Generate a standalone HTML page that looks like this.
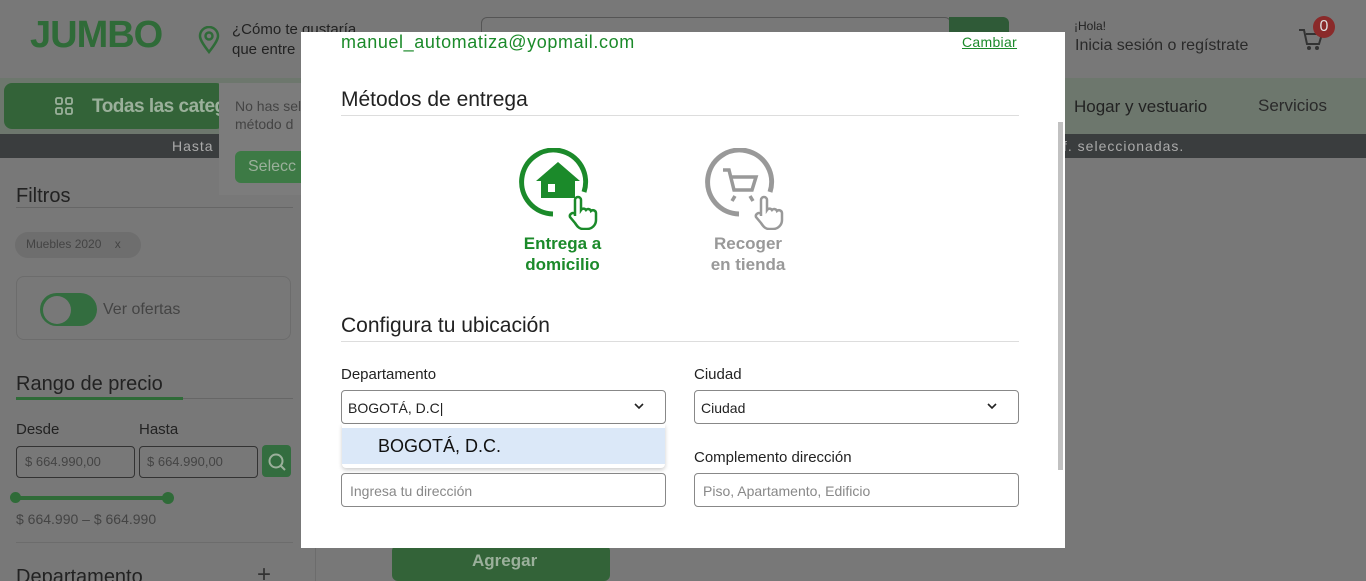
<!DOCTYPE html>
<html><head><meta charset="utf-8"><style>
*{box-sizing:border-box;margin:0;padding:0}
html,body{width:1366px;height:581px;overflow:hidden}
body{background:#787878;font-family:"Liberation Sans",sans-serif;position:relative;color:#333}
.a{position:absolute}
.t{position:absolute;white-space:nowrap}
</style></head><body>
<div class="t" style="left:30px;top:14px;font-size:38px;font-weight:bold;color:#2f6b38;letter-spacing:-1px">JUMBO</div>
<svg class="a" style="left:197px;top:26px" width="24" height="28" viewBox="0 0 24 28"><path d="M12 26C5 17 3 13 3 10a9 9 0 0 1 18 0c0 3-2 7-9 16z" fill="none" stroke="#2f6b38" stroke-width="2.5"/><circle cx="12" cy="10" r="3.5" fill="none" stroke="#2f6b38" stroke-width="2.5"/></svg>
<div class="t" style="left:232px;top:20px;font-size:15px;color:#222;line-height:20px">¿Cómo te gustaría<br>que entre</div>
<div class="a" style="left:481px;top:17px;width:470px;height:32px;border:1px solid #555;border-radius:6px"></div>
<div class="a" style="left:949px;top:17px;width:60px;height:32px;background:#2f5a37;border-radius:0 6px 6px 0"></div>
<div class="t" style="left:1074px;top:19px;font-size:12px;color:#222">¡Hola!</div>
<div class="t" style="left:1075px;top:37px;font-size:16px;color:#2a2a2a">Inicia sesión o regístrate</div>
<svg class="a" style="left:1297px;top:27px" width="28" height="26" viewBox="0 0 28 26"><path d="M2 3h5l3 14h12l3-10H9" fill="none" stroke="#333" stroke-width="2"/><circle cx="12" cy="21" r="2" fill="#333"/><circle cx="20" cy="21" r="2" fill="#333"/></svg>
<div class="a" style="left:1313px;top:16px;width:22px;height:22px;border-radius:50%;background:#8a2a2a;color:#ddd;font-size:16px;text-align:center;line-height:22px">0</div>
<div class="a" style="left:0;top:78px;width:1366px;height:56px;background:#6d776d"></div>
<div class="a" style="left:4px;top:83px;width:220px;height:46px;background:#336338;border-radius:8px"></div>
<svg class="a" style="left:55px;top:97px" width="18" height="18"><g fill="none" stroke="#9bb09b" stroke-width="1.8"><rect x="1" y="1" width="6" height="6" rx="1.5"/><rect x="11" y="1" width="6" height="6" rx="1.5"/><rect x="1" y="11" width="6" height="6" rx="1.5"/><rect x="11" y="11" width="6" height="6" rx="1.5"/></g></svg>
<div class="t" style="left:92px;top:96px;font-size:19px;font-weight:bold;color:#9bb09b;letter-spacing:-0.5px">Todas las categ</div>
<div class="t" style="left:1074px;top:97px;font-size:17px;color:#222">Hogar y vestuario</div>
<div class="t" style="left:1258px;top:96px;font-size:17px;color:#2a2a2a">Servicios</div>
<div class="a" style="left:0;top:134px;width:1366px;height:24px;background:#3a3d3e"></div>
<div class="t" style="left:172px;top:138px;font-size:14px;color:#aaa;letter-spacing:1px">Hasta</div>
<div class="t" style="left:1063px;top:138px;font-size:14px;color:#aaa;letter-spacing:1px">f. seleccionadas.</div>
<div class="a" style="left:219px;top:83px;width:90px;height:112px;background:#7c7c7c"></div>
<div class="t" style="left:235px;top:97px;font-size:14px;color:#444;line-height:18px">No has sel<br>método d</div>
<div class="a" style="left:235px;top:151px;width:80px;height:32px;background:#3d7a45;border-radius:6px"></div>
<div class="t" style="left:248px;top:158px;font-size:16px;color:#9bb09b">Selecc</div>
<div class="t" style="left:16px;top:185px;font-size:20px;color:#222">Filtros</div>
<div class="a" style="left:16px;top:207px;width:277px;height:1px;background:#666"></div>
<div class="a" style="left:15px;top:232px;width:126px;height:26px;border-radius:13px;background:#6e6e6e"></div>
<div class="t" style="left:26px;top:237px;font-size:12px;color:#444">Muebles 2020 &nbsp;&nbsp;&nbsp;x</div>
<div class="a" style="left:16px;top:276px;width:275px;height:64px;border:1px solid #6c6c6c;border-radius:8px"></div>
<div class="a" style="left:40px;top:293px;width:57px;height:33px;border-radius:17px;background:#336d3f"></div>
<div class="a" style="left:43px;top:296px;width:28px;height:28px;border-radius:50%;background:#787878"></div>
<div class="t" style="left:103px;top:301px;font-size:16px;color:#444">Ver ofertas</div>
<div class="t" style="left:16px;top:373px;font-size:20px;color:#222">Rango de precio</div>
<div class="a" style="left:16px;top:398px;width:277px;height:1px;background:#666"></div>
<div class="a" style="left:16px;top:397px;width:167px;height:3px;background:#2f6b38"></div>
<div class="t" style="left:16px;top:421px;font-size:15px;color:#222">Desde</div>
<div class="t" style="left:139px;top:421px;font-size:15px;color:#222">Hasta</div>
<div class="a" style="left:16px;top:446px;width:119px;height:32px;border:1px solid #333;border-radius:4px"></div>
<div class="a" style="left:139px;top:446px;width:119px;height:32px;border:1px solid #333;border-radius:4px"></div>
<div class="t" style="left:25px;top:454px;font-size:13px;color:#444">$ 664.990,00</div>
<div class="t" style="left:147px;top:454px;font-size:13px;color:#444">$ 664.990,00</div>
<div class="a" style="left:262px;top:445px;width:29px;height:32px;background:#336d3f;border-radius:4px"></div>
<svg class="a" style="left:267px;top:452px" width="20" height="20"><circle cx="9" cy="9" r="6.5" fill="none" stroke="#9bb09b" stroke-width="2"/><path d="M14 14l4 4" stroke="#9bb09b" stroke-width="2"/></svg>
<div class="a" style="left:15px;top:496px;width:154px;height:4px;background:#2f6b38"></div>
<div class="a" style="left:10px;top:492px;width:11px;height:11px;border-radius:50%;background:#2f6b38"></div>
<div class="a" style="left:162px;top:492px;width:12px;height:12px;border-radius:50%;background:#2f6b38"></div>
<div class="t" style="left:16px;top:511px;font-size:14px;color:#444">$ 664.990 – $ 664.990</div>
<div class="a" style="left:16px;top:542px;width:277px;height:1px;background:#6c6c6c"></div>
<div class="t" style="left:16px;top:566px;font-size:20px;color:#222">Departamento</div>
<div class="t" style="left:257px;top:561px;font-size:24px;color:#333">+</div>
<div class="a" style="left:315px;top:158px;width:1px;height:423px;background:#6c6c6c"></div>
<div class="a" style="left:392px;top:545px;width:218px;height:36px;background:#336338;border-radius:6px"></div>
<div class="t" style="left:472px;top:551px;font-size:17px;font-weight:bold;color:#9bb09b">Agregar</div>

<div class="a" style="left:301px;top:32px;width:764px;height:516px;background:#fff"></div>
<div class="a" style="left:1058px;top:122px;width:5px;height:348px;background:#c1c1c1"></div>
<div class="t" style="left:341px;top:32px;font-size:18px;color:#1b8a2a;letter-spacing:0.6px">manuel_automatiza@yopmail.com</div>
<div class="t" style="left:962px;top:34px;font-size:14px;color:#1b8a2a;text-decoration:underline;letter-spacing:0.3px">Cambiar</div>
<div class="t" style="left:341px;top:88px;font-size:21px;color:#222">Métodos de entrega</div>
<div class="a" style="left:341px;top:115px;width:678px;height:1px;background:#ddd"></div>
<svg class="a" style="left:518px;top:148px" width="90" height="82" viewBox="0 0 90 82">
<path d="M66 44A32 32 0 1 0 35 66" fill="none" stroke="#1b8a2a" stroke-width="5"/>
<path d="M18 33L40 14 62 33 57 33 57 50 23 50 23 33Z" fill="#1b8a2a"/>
<rect x="30" y="36" width="7" height="8" fill="#fff"/>
<path d="M57 68V52a3 3 0 0 1 6 0v10a3 3 0 0 1 5 0 3 3 0 0 1 5 1 3 3 0 0 1 5 2v7c0 5-4 9-9 9h-4c-4 0-6-3-8-6l-5-6a3 3 0 0 1 5-3z" fill="#fff" stroke="#1b8a2a" stroke-width="2.5"/>
</svg>
<div class="t" style="left:518px;top:233px;font-size:17px;font-weight:bold;color:#1b8a2a;text-align:center;line-height:21px;width:89px">Entrega a<br>domicilio</div>
<svg class="a" style="left:704px;top:148px" width="90" height="82" viewBox="0 0 90 82">
<path d="M66 44A32 32 0 1 0 35 66" fill="none" stroke="#999" stroke-width="5"/>
<path d="M19 22h6l5 20h18l4-13H27M31 48l-3 5M46 48l3 5" fill="none" stroke="#999" stroke-width="3.5"/>
<path d="M57 68V52a3 3 0 0 1 6 0v10a3 3 0 0 1 5 0 3 3 0 0 1 5 1 3 3 0 0 1 5 2v7c0 5-4 9-9 9h-4c-4 0-6-3-8-6l-5-6a3 3 0 0 1 5-3z" fill="#fff" stroke="#999" stroke-width="2.5"/>
</svg>
<div class="t" style="left:704px;top:233px;font-size:17px;font-weight:bold;color:#999;text-align:center;line-height:21px;width:88px">Recoger<br>en tienda</div>
<div class="t" style="left:341px;top:314px;font-size:21px;color:#222">Configura tu ubicación</div>
<div class="a" style="left:341px;top:341px;width:678px;height:1px;background:#ddd"></div>
<div class="t" style="left:341px;top:366px;font-size:15px;color:#222">Departamento</div>
<div class="t" style="left:694px;top:366px;font-size:15px;color:#222">Ciudad</div>
<div class="a" style="left:341px;top:390px;width:325px;height:34px;border:1px solid #888;border-radius:4px"></div>
<div class="t" style="left:348px;top:400px;font-size:14px;color:#222">BOGOTÁ, D.C|</div>
<svg class="a" style="left:634px;top:403px" width="10" height="7"><path d="M1 1l4 4 4-4" fill="none" stroke="#222" stroke-width="1.6"/></svg>
<div class="a" style="left:694px;top:390px;width:325px;height:34px;border:1px solid #888;border-radius:4px"></div>
<div class="t" style="left:701px;top:400px;font-size:14px;color:#222">Ciudad</div>
<svg class="a" style="left:987px;top:403px" width="10" height="7"><path d="M1 1l4 4 4-4" fill="none" stroke="#222" stroke-width="1.6"/></svg>
<div class="t" style="left:694px;top:449px;font-size:15px;color:#222">Complemento dirección</div>
<div class="a" style="left:341px;top:473px;width:325px;height:34px;border:1px solid #888;border-radius:4px"></div>
<div class="t" style="left:350px;top:483px;font-size:14px;color:#888">Ingresa tu dirección</div>
<div class="a" style="left:694px;top:473px;width:325px;height:34px;border:1px solid #888;border-radius:4px"></div>
<div class="t" style="left:703px;top:483px;font-size:14px;color:#888">Piso, Apartamento, Edificio</div>
<div class="a" style="left:342px;top:424px;width:323px;height:44px;background:#fff;box-shadow:0 2px 4px rgba(0,0,0,.2);border-radius:0 0 4px 4px"></div>
<div class="a" style="left:342px;top:428px;width:323px;height:36px;background:#dbe8f8"></div>
<div class="t" style="left:378px;top:436px;font-size:18px;color:#111">BOGOTÁ, D.C.</div>
</body></html>
